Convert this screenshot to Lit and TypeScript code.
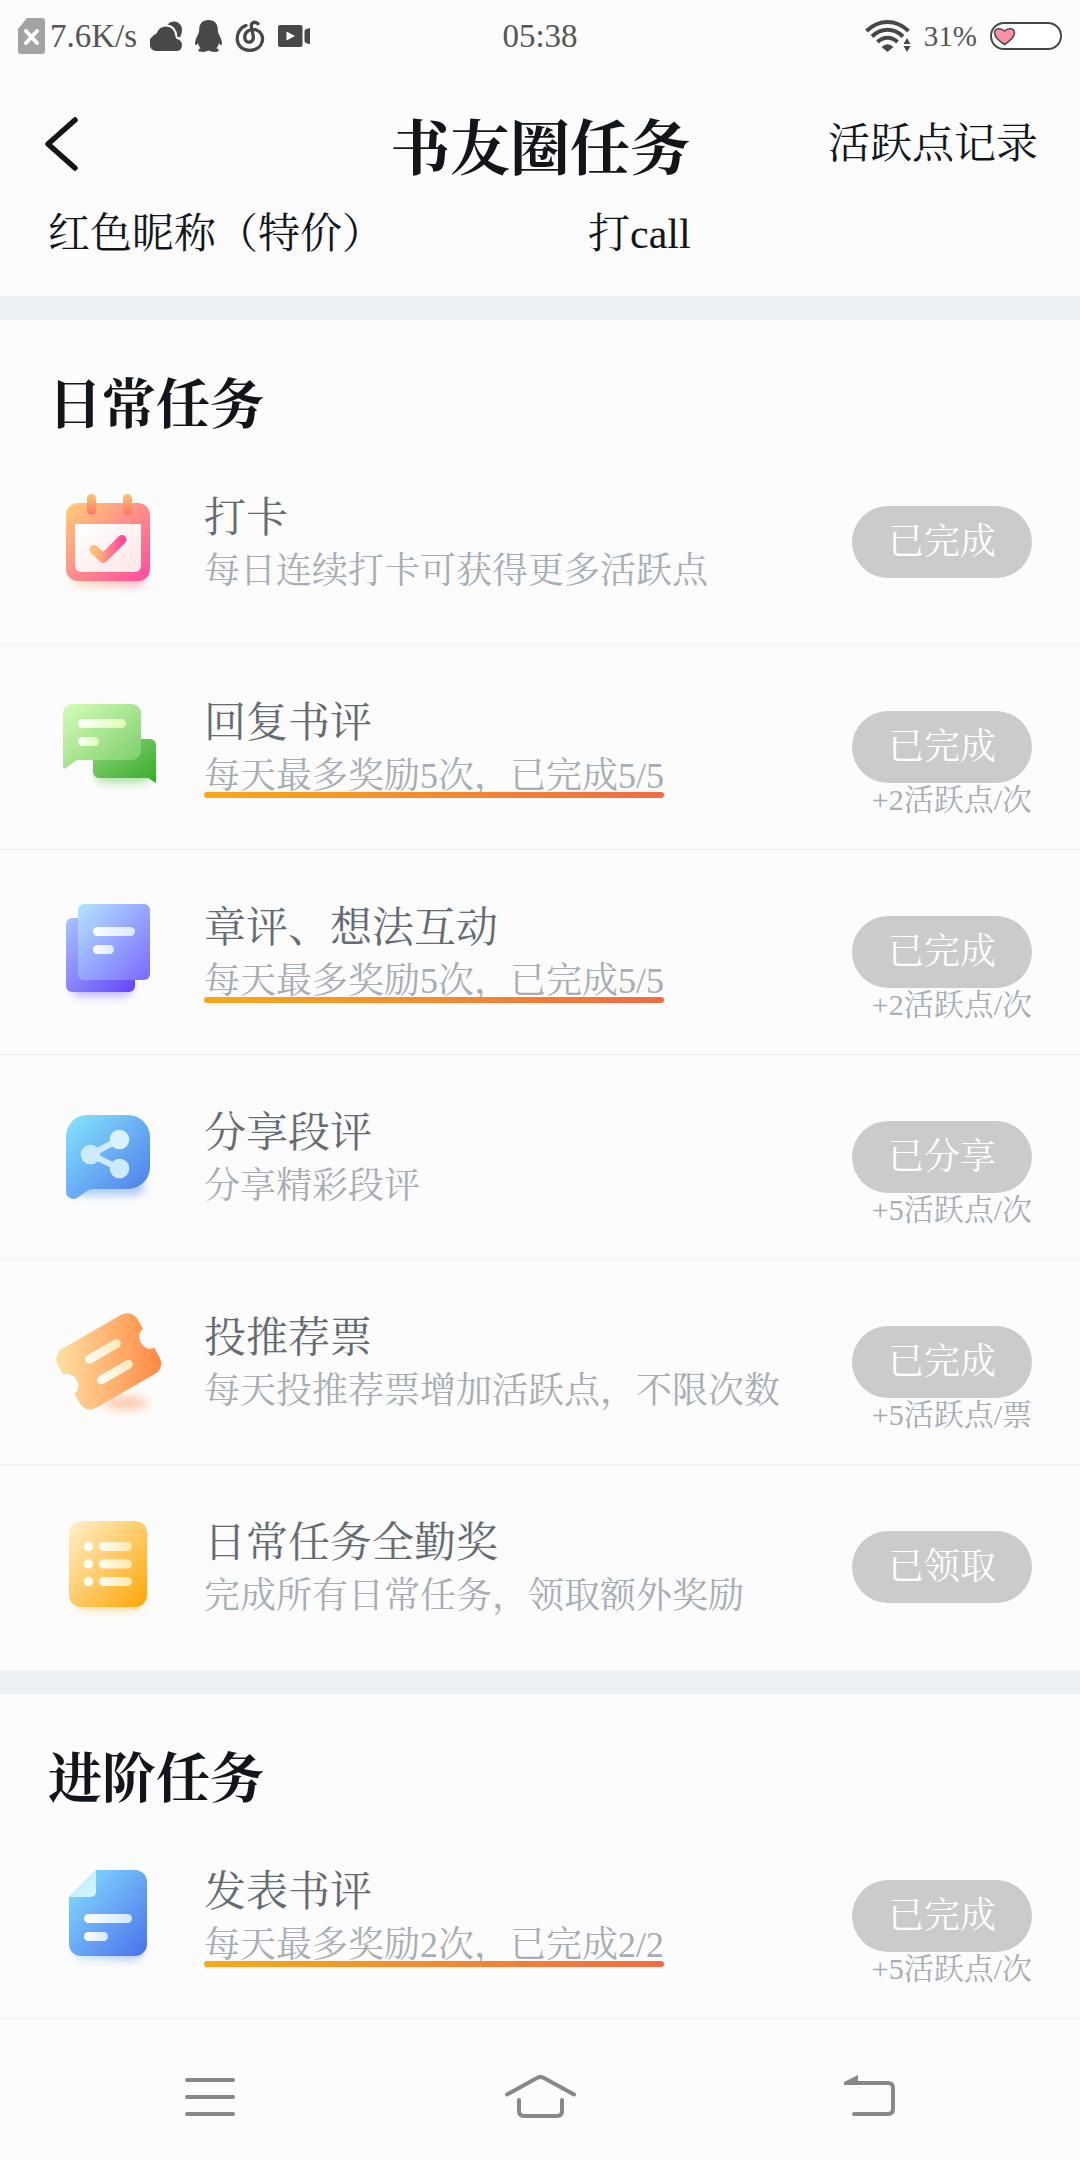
import { LitElement, html, css, svg, nothing } from "lit";
import type { SVGTemplateResult } from "lit";
import { customElement, property } from "lit/decorators.js";

interface Task {
  icon: string;
  title: string;
  note: string;
  progress?: boolean;
  state: string;
  reward?: string;
}

interface TaskGroup {
  heading: string;
  tasks: Task[];
}

const GROUPS: TaskGroup[] = [
  {
    heading: "日常任务",
    tasks: [
      { icon: "calendar", title: "打卡", note: "每日连续打卡可获得更多活跃点", state: "已完成" },
      { icon: "reply", title: "回复书评", note: "每天最多奖励5次，已完成5/5", progress: true, state: "已完成", reward: "+2活跃点/次" },
      { icon: "pages", title: "章评、想法互动", note: "每天最多奖励5次，已完成5/5", progress: true, state: "已完成", reward: "+2活跃点/次" },
      { icon: "share", title: "分享段评", note: "分享精彩段评", state: "已分享", reward: "+5活跃点/次" },
      { icon: "ticket", title: "投推荐票", note: "每天投推荐票增加活跃点，不限次数", state: "已完成", reward: "+5活跃点/票" },
      { icon: "list", title: "日常任务全勤奖", note: "完成所有日常任务，领取额外奖励", state: "已领取" },
    ],
  },
  {
    heading: "进阶任务",
    tasks: [
      { icon: "document", title: "发表书评", note: "每天最多奖励2次，已完成2/2", progress: true, state: "已完成", reward: "+5活跃点/次" },
    ],
  },
];

/** Diagonal two-stop gradient across the painted shape. */
const gradient = (id: string, from: string, to: string, x2 = 1, y2 = 1) => svg`
  <linearGradient id=${id} x1="0" y1="0" x2=${x2} y2=${y2}>
    <stop offset="0" stop-color=${from}></stop>
    <stop offset="1" stop-color=${to}></stop>
  </linearGradient>`;

const softness = svg`
  <filter id="soft" x="-40%" y="-80%" width="180%" height="260%">
    <feGaussianBlur stdDeviation="5"></feGaussianBlur>
  </filter>`;

const ICONS: Record<string, SVGTemplateResult> = {
  calendar: svg`
    <defs>
      ${softness}
      ${gradient("frame", "#ffcf74", "#ff4a9f")}
      ${gradient("ring", "#ffc46f", "#ff7468", 0, 1)}
      ${gradient("sheet", "#ffffff", "#ffe6e8")}
      ${gradient("tick", "#ffc274", "#ff4a9a", 1, 0)}
      ${gradient("shade", "#ffd58f", "#ff6f8e", 1, 0)}
    </defs>
    <rect x="24" y="84" width="72" height="20" rx="8" fill="url(#shade)" filter="url(#soft)" opacity=".6"></rect>
    <rect x="18" y="21" width="84" height="78" rx="12" fill="url(#frame)"></rect>
    <rect x="39" y="12" width="9" height="21" rx="4.5" fill="url(#ring)"></rect>
    <rect x="75" y="12" width="9" height="21" rx="4.5" fill="url(#ring)"></rect>
    <path d="M27 42H93V84a6 6 0 0 1-6 6H33a6 6 0 0 1-6-6Z" fill="url(#sheet)"></path>
    <path d="M46 67.5 55 76.5 74 57.500" fill="none" stroke="url(#tick)" stroke-width="9" stroke-linecap="round" stroke-linejoin="round"></path>`,
  reply: svg`
    <defs>
      ${softness}
      ${gradient("front", "#d6fdb8", "#78cb68")}
      ${gradient("back", "#8fd67c", "#35ab2a")}
      ${gradient("bar", "#ffffff", "#dcffb4", 1, 0)}
    </defs>
    <rect x="48" y="80" width="54" height="16" rx="8" fill="#5fc94f" filter="url(#soft)" opacity=".5"></rect>
    <path d="M51 52H102a6 6 0 0 1 6 6V96L100 91H51a6 6 0 0 1-6-6V58a6 6 0 0 1 6-6Z" fill="url(#back)"></path>
    <path d="M24 17H84a9 9 0 0 1 9 9V64a9 9 0 0 1-9 9H29L17 81.500Q15 82.500 15 80V26a9 9 0 0 1 9-9Z" fill="url(#front)"></path>
    <rect x="30" y="32" width="48" height="9" rx="4.5" fill="url(#bar)"></rect>
    <rect x="30" y="50" width="21" height="9" rx="4.5" fill="url(#bar)"></rect>`,
  pages: svg`
    <defs>
      ${softness}
      ${gradient("front", "#b4e4ff", "#7a69ff")}
      ${gradient("back", "#a8c4ff", "#6442fb")}
      ${gradient("bar", "#ffffff", "#d7e9ff", 1, 0)}
    </defs>
    <rect x="24" y="86" width="60" height="18" rx="8" fill="#7c6bff" filter="url(#soft)" opacity=".5"></rect>
    <rect x="18" y="26" width="69" height="74" rx="6" fill="url(#back)"></rect>
    <rect x="30" y="12" width="72" height="76" rx="6" fill="url(#front)"></rect>
    <rect x="45" y="35" width="42" height="9" rx="4.5" fill="url(#bar)"></rect>
    <rect x="45" y="53" width="21" height="9" rx="4.5" fill="url(#bar)"></rect>`,
  share: svg`
    <defs>
      ${softness}
      ${gradient("bubble", "#87e6ff", "#4b77ea")}
    </defs>
    <rect x="26" y="80" width="70" height="18" rx="8" fill="#5f93f5" filter="url(#soft)" opacity=".5"></rect>
    <path d="M39 18H80a22 22 0 0 1 22 22V70a22 22 0 0 1-22 22H46Q42 92 39 94L29 101Q26 102.500 23 101.500 18 99.500 18 95V39a21 21 0 0 1 21-21Z" fill="url(#bubble)"></path>
    <path d="M71.500 42.500 42.500 57.500 71.500 71.500" fill="none" stroke="#cdeaff" stroke-width="6"></path>
    <circle cx="42.500" cy="57.500" r="9.8" fill="#cdeaff"></circle>
    <circle cx="71.500" cy="42.500" r="9.8" fill="#dbf1ff"></circle>
    <circle cx="71.500" cy="71.500" r="9.8" fill="#cdeaff"></circle>`,
  ticket: svg`
    <defs>
      ${softness}
      <linearGradient id="card" gradientUnits="userSpaceOnUse" x1="-46" y1="-26" x2="46" y2="27">
        <stop offset="0" stop-color="#ffe0a3"></stop>
        <stop offset="1" stop-color="#ff8842"></stop>
      </linearGradient>
      ${gradient("bar", "#fffdf6", "#ffe9bd", 1, 0)}
    </defs>
    <ellipse cx="78" cy="101" rx="22" ry="7" fill="#ff9a62" filter="url(#soft)" opacity=".5"></ellipse>
    <g transform="translate(60.7 59.300) rotate(-30)">
      <path d="M-34-34H34A12 12 0 0 1 46-22V-11A9 11 0 1 0 46 11V22A12 12 0 0 1 34 34H-34A12 12 0 0 1-46 22V11A9 11 0 1 0-46-11V-22A12 12 0 0 1-34-34Z" fill="url(#card)"></path>
      <rect x="-20" y="-16" width="40" height="9" rx="4.5" fill="url(#bar)"></rect>
      <rect x="-20" y="8" width="40" height="9" rx="4.5" fill="url(#bar)"></rect>
    </g>`,
  list: svg`
    <defs>
      ${softness}
      ${gradient("card", "#fff1cd", "#ffa503")}
      ${gradient("bar", "#fffef8", "#ffe9a6", 1, 0)}
    </defs>
    <rect x="30" y="86" width="64" height="17" rx="8" fill="#ffc04d" filter="url(#soft)" opacity=".55"></rect>
    <rect x="21" y="14" width="78" height="86" rx="12" fill="url(#card)"></rect>
    ${[35, 52.5, 70].map(
      (y) => svg`
        <circle cx="40.500" cy=${y + 4.5} r="4.7" fill="#fffdf3"></circle>
        <rect x="51" y=${y} width="33" height="9" rx="4.5" fill="url(#bar)"></rect>`
    )}`,
  document: svg`
    <defs>
      ${softness}
      ${gradient("page", "#86e2ff", "#4a70ec")}
      ${gradient("fold", "#b4ecff", "#d8f5ff")}
      ${gradient("bar", "#ffffff", "#cfe8ff", 1, 0)}
      ${gradient("shade", "#8fdcff", "#5f7cf5", 1, 0)}
    </defs>
    <rect x="26" y="86" width="68" height="17" rx="8" fill="url(#shade)" filter="url(#soft)" opacity=".55"></rect>
    <path d="M48 14H87a12 12 0 0 1 12 12V88a12 12 0 0 1-12 12H33a12 12 0 0 1-12-12V41Z" fill="url(#page)"></path>
    <path d="M48 14V36a5 5 0 0 1-5 5H21Z" fill="url(#fold)"></path>
    <rect x="36" y="58" width="48" height="9" rx="4.5" fill="url(#bar)"></rect>
    <rect x="36" y="76" width="24" height="9" rx="4.5" fill="url(#bar)"></rect>`,
};

@customElement("task-icon")
export class TaskIcon extends LitElement {
  @property() name = "";

  static styles = css`
    :host,
    .art {
      display: block;
      width: 120px;
      height: 120px;
    }
  `;

  render() {
    return html`<svg class="art" viewBox="0 0 120 120" aria-hidden="true">${ICONS[this.name]}</svg>`;
  }
}

@customElement("task-row")
export class TaskRow extends LitElement {
  @property({ attribute: false }) task!: Task;

  static styles = css`
    :host {
      display: block;
    }
    .row {
      display: flex;
      align-items: flex-start;
      gap: 36px;
      padding: 42px 48px;
    }
    .text {
      flex: 1;
      min-width: 0;
      padding-top: 9px;
    }
    .title {
      margin: 0;
      font-size: 42px;
      font-weight: 400;
      line-height: 54px;
      color: #646b73;
    }
    .note {
      position: relative;
      display: inline-block;
      font-size: 36px;
      font-weight: 400;
      line-height: 52px;
      color: #a6adb5;
    }
    .progress::before {
      content: "";
      position: absolute;
      left: 0;
      right: 0;
      bottom: 4px;
      height: 6px;
      border-radius: 3px;
      background: linear-gradient(90deg, #faa819, #f26b43);
    }
    .action {
      display: flex;
      flex-direction: column;
      align-items: flex-end;
      padding-top: 24px;
    }
    .state {
      width: 180px;
      height: 72px;
      padding: 0;
      border: 0;
      border-radius: 36px;
      background: #cbcbcb;
      color: #ffffff;
      font: inherit;
      font-size: 36px;
      font-weight: 400;
      line-height: 72px;
    }
    .reward {
      height: 24px;
      font-size: 30px;
      font-weight: 400;
      line-height: 34px;
      color: #a6adb5;
    }
  `;

  render() {
    const t = this.task;
    return html`
      <div class="row">
        <task-icon name=${t.icon}></task-icon>
        <div class="text">
          <h3 class="title">${t.title}</h3>
          <span class="note ${t.progress ? "progress" : ""}">${t.note}</span>
        </div>
        <div class="action">
          <button class="state" type="button" disabled>${t.state}</button>
          ${t.reward ? html`<span class="reward">${t.reward}</span>` : nothing}
        </div>
      </div>
    `;
  }
}

@customElement("status-bar")
export class StatusBar extends LitElement {
  static styles = css`
    :host {
      display: block;
    }
    .bar {
      display: grid;
      grid-template-columns: 1fr auto 1fr;
      align-items: center;
      height: 72px;
      padding: 0 18px;
      font-size: 33px;
      color: #555555;
    }
    .side {
      display: flex;
      align-items: center;
      gap: 13px;
    }
    .net {
      display: flex;
      align-items: center;
      gap: 5px;
    }
    .end {
      justify-content: flex-end;
    }
    .percent {
      font-size: 29px;
    }
    .glyph {
      display: block;
    }
  `;

  render() {
    return html`
      <div class="bar">
        <div class="side">
          <div class="net">
            <svg class="glyph" width="27" height="36" viewBox="0 0 27 36" aria-hidden="true">
              <path d="M9 0H24a3 3 0 0 1 3 3V33a3 3 0 0 1-3 3H3a3 3 0 0 1-3-3V11Z" fill="#a3a3a3"></path>
              <path d="M8 13 19 25M19 13 8 25" stroke="#fff" stroke-width="4" stroke-linecap="round"></path>
            </svg>
            <span>7.6K/s</span>
          </div>
          <svg class="glyph" width="32" height="32" viewBox="0 0 32 32" fill="#484848" aria-hidden="true">
            <path d="M8 31A8 8 0 0 1 2 17Q4 14 6.500 13.500 9 6.500 16 6.500 24.500 7 25.500 16.500 26 19 27 19 32 20 32 25.500 31.500 31 26 31Z"></path>
            <path d="M17.500 4.500Q20.500 1 25 1.500 32 3 32 10 32 13.500 30.500 16.500 29 17.500 27.500 17 27 6 17.500 4.500Z"></path>
          </svg>
          <svg class="glyph" width="27" height="32" viewBox="0 0 27 32" fill="#484848" aria-hidden="true">
            <path d="M13.500 0C20 0 23 4.500 22.800 10 22.800 12 23.500 13.500 24.300 15 26 18.500 27.500 22 26.800 24.500 26.200 26 25 24.500 24 23 23.500 25.500 22.500 27 21.500 28.200 23.500 29 24 30 23.500 31 22 32.300 16 32.200 13.500 30.500 11 32.200 5 32.300 3.500 31 3 30 3.500 29 5.500 28.200 4.500 27 3.500 25.500 3 23 2 24.500.8 26 .2 24.500-.5 22 1 18.500 2.700 15 3.500 13.500 4.200 12 4.200 10 4 4.500 7 0 13.500 0Z"></path>
          </svg>
          <svg class="glyph" width="30" height="32" viewBox="0 0 30 32" fill="none" stroke="#484848" stroke-width="3.300" stroke-linecap="round" stroke-linejoin="round" aria-hidden="true">
            <path d="M11 5.500C-1.500 10-1 30.300 14.500 30.300 29 30.300 31.500 14 21.500 10 16 8 9.700 11.500 9.700 17 9.700 22 14 23 16.300 21.500 18.800 20 18.500 17 18 15L16.500 7.500C15.500 3 19 .5 23 3.800"></path>
          </svg>
          <svg class="glyph" width="32" height="22" viewBox="0 0 32 22" aria-hidden="true">
            <rect width="24.500" height="22" rx="2" fill="#484848"></rect>
            <path d="M26.500 6Q27 3.500 32 3V19Q27 18.500 26.500 16Z" fill="#484848"></path>
            <path d="M8.500 6.500 17 11 8.500 15.500Z" fill="#fcfcfc"></path>
          </svg>
        </div>
        <time>05:38</time>
        <div class="side end">
          <svg class="glyph" width="46" height="32" viewBox="0 0 46 32" aria-hidden="true">
            <g fill="none" stroke="#484848" stroke-width="4">
              <path d="M1.500 11Q11 2 22.500 2T43.500 11"></path>
              <path d="M7 16.500Q14 9.800 22.500 9.800T38 16.500"></path>
              <path d="M12.500 22Q17 17.800 22.500 17.800T32.500 22"></path>
            </g>
            <path d="M16.500 27Q22.500 21.500 28.500 27L22.500 32Z" fill="#484848"></path>
            <path d="M42 18 45.500 24H38.500ZM42 32 38.500 26H45.500Z" fill="#484848"></path>
          </svg>
          <span class="percent">31%</span>
          <svg class="glyph" width="72" height="28" viewBox="0 0 72 28" aria-hidden="true">
            <rect x="1" y="1" width="70" height="26" rx="13" fill="#fff" stroke="#484848" stroke-width="2"></rect>
            <path d="M14.500 22.500C9 19 4.500 14.500 4.500 10.500 5 6 11 5.500 14.500 9 18 5.500 24 6 24.500 10.500 24.500 14.500 20 19 14.500 22.500Z" fill="#ff8fa3" stroke="#484848" stroke-width="1.500"></path>
          </svg>
        </div>
      </div>
    `;
  }
}

@customElement("app-root")
export class AppRoot extends LitElement {
  static styles = css`
    :host {
      display: block;
      background: #fcfcfc;
      color: #12161b;
      font-family: "Liberation Serif", "Noto Serif CJK SC", "Noto Sans CJK SC", serif;
    }
    .screen {
      display: flex;
      flex-direction: column;
      min-height: 100vh;
    }
    .head {
      display: grid;
      grid-template-columns: 1fr auto 1fr;
      align-items: center;
      padding: 8px 42px 0;
    }
    .back {
      width: 40px;
      height: 60px;
      padding: 0;
      border: 0;
      background: none;
    }
    .heading {
      margin: 0;
      padding-top: 12px;
      font-size: 60px;
      line-height: 116px;
      font-weight: 700;
    }
    .log {
      justify-self: end;
      padding-bottom: 8px;
      color: inherit;
      text-decoration: none;
      font-size: 42px;
      font-weight: 400;
    }
    .perks {
      display: grid;
      grid-template-columns: 1fr 1fr;
      font-size: 42px;
      font-weight: 400;
      line-height: 52px;
      padding-bottom: 36px;
    }
    .perk {
      padding-left: 48px;
    }
    .group {
      border-top: 24px solid #edf1f5;
    }
    .group-title {
      margin: 0;
      padding: 54px 48px 2px;
      font-size: 54px;
      line-height: 64px;
      font-weight: 700;
    }
    .task {
      border-bottom: 1px solid #efefef;
    }
    .task.closing {
      border-bottom-color: transparent;
    }
    .keys {
      flex: 1;
      display: grid;
      grid-template-columns: repeat(3, 1fr);
      place-items: center;
      padding: 14px 45px 0;
      min-height: 96px;
    }
    .key {
      width: 72px;
      height: 48px;
      padding: 0;
      border: 0;
      background: none;
    }
    .glyph {
      display: block;
    }
  `;

  render() {
    return html`
      <div class="screen" lang="zh-CN">
        <status-bar></status-bar>
        <header class="head">
          <button class="back" type="button" aria-label="返回">
            <svg class="glyph" width="40" height="60" viewBox="0 0 40 60" fill="none" stroke="#12161b" stroke-width="5.500" stroke-linecap="round" stroke-linejoin="round" aria-hidden="true">
              <path d="M33 6 6 30 33 54"></path>
            </svg>
          </button>
          <h1 class="heading">书友圈任务</h1>
          <a class="log" href="#log">活跃点记录</a>
        </header>
        <div class="perks">
          <span class="perk">红色昵称（特价）</span>
          <span class="perk">打call</span>
        </div>
        ${GROUPS.map(
          (group, g) => html`
            <section class="group">
              <h2 class="group-title">${group.heading}</h2>
              ${group.tasks.map(
                (task, i) => html`
                  <task-row
                    class="task ${g < GROUPS.length - 1 && i === group.tasks.length - 1 ? "closing" : ""}"
                    .task=${task}
                  ></task-row>
                `
              )}
            </section>
          `
        )}
        <nav class="keys">
          <button class="key" type="button" aria-label="菜单">
            <svg class="glyph" width="72" height="48" viewBox="0 0 72 48" stroke="#888" stroke-width="4" stroke-linecap="round" aria-hidden="true">
              <path d="M13 7H59M13 24H59M13 41H59"></path>
            </svg>
          </button>
          <button class="key" type="button" aria-label="主页">
            <svg class="glyph" width="72" height="48" viewBox="0 0 72 48" fill="none" stroke="#888" stroke-width="4" stroke-linecap="round" stroke-linejoin="round" aria-hidden="true">
              <path d="M3 21.500 33 5Q36.500 3 40 5L70 21.500"></path>
              <path d="M15 27V38Q15 43 20 43H53Q58 43 58 38V27"></path>
            </svg>
          </button>
          <button class="key" type="button" aria-label="返回上一页">
            <svg class="glyph" width="72" height="48" viewBox="0 0 72 48" fill="none" stroke="#888" stroke-width="4" stroke-linecap="round" aria-hidden="true">
              <path d="M14 10H54Q59 10 59 15V36Q59 41 54 41H20"></path>
              <path d="M10 12V9L24 2V12Z" fill="#888" stroke="none"></path>
            </svg>
          </button>
        </nav>
      </div>
    `;
  }
}
